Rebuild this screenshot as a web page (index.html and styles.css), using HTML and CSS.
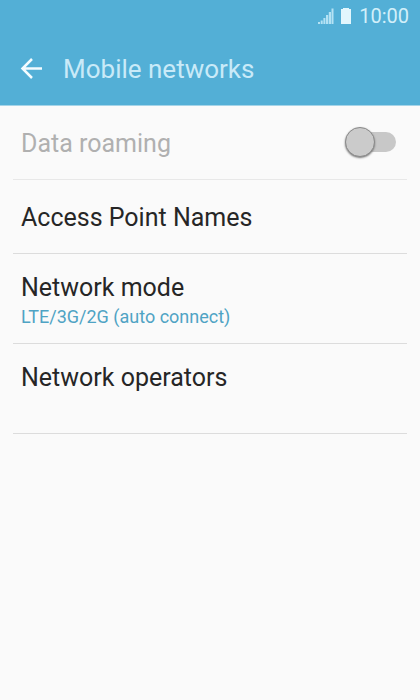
FILE: index.html
```
<!DOCTYPE html>
<html lang="en">
<head>
<meta charset="utf-8">
<meta name="viewport" content="width=device-width, initial-scale=1">
<title>Mobile networks</title>
<link rel="stylesheet" href="styles.css">
</head>
<body>
<header class="header">
  <div class="status">
    <svg class="signal" width="17" height="16" viewBox="0 0 17 16" aria-hidden="true">
      <path d="M1 14h2v2H1zM3.700 12.500h2V16h-2zM6.400 10h2v6h-2zM9 7h2.200v9H9zM11.800 4H14v12h-2.200zM14.500 0.500h2V16h-2z"/>
    </svg>
    <svg class="battery" width="12" height="16" viewBox="0 0 12 16" aria-hidden="true">
      <path d="M3 0h6v1h2v15H1V1h2z"/>
    </svg>
    <time class="clock">10:00</time>
  </div>
  <div class="bar">
    <button class="back" type="button" aria-label="Back">
      <svg width="22" height="22" viewBox="0 0 22 22" aria-hidden="true">
        <path d="M22 10.500H3M12 1L2.500 10.500L12 20"/>
      </svg>
    </button>
    <h1 class="title">Mobile networks</h1>
  </div>
</header>
<main class="list">
  <div class="row disabled">
    <label class="name" for="roaming">Data roaming</label>
    <input class="switch" id="roaming" type="checkbox" role="switch" disabled>
  </div>
  <button class="row" type="button"><span class="name">Access Point Names</span></button>
  <button class="row tall" type="button">
    <span class="name">Network mode</span>
    <span class="summary">LTE/3G/2G (auto connect)</span>
  </button>
  <button class="row tall" type="button">
    <span class="name">Network operators</span>
  </button>
</main>
</body>
</html>
```
FILE: styles.css
```
*,
*::before {
  box-sizing: border-box;
}

body {
  margin: 0;
  min-height: 100vh;
  background: #fafafa;
  color: #262626;
  font-family: Roboto, "Liberation Sans", sans-serif;
}

button {
  margin: 0;
  padding: 0;
  border: 0;
  background: none;
  color: inherit;
  font: inherit;
  text-align: left;
}

.header {
  background: #53afd6;
  border-bottom: 1px solid #a5d4e8;
}

.status {
  display: flex;
  align-items: center;
  justify-content: flex-end;
  height: 32px;
  padding-right: 11px;
  color: #d2effa;
}

.signal {
  fill: #b4e2f4;
}

.battery {
  margin: 0 7px 0 6px;
  fill: #e2f6fd;
}

.clock {
  font-size: 20px;
  line-height: 32px;
}

.bar {
  display: flex;
  align-items: center;
  height: 73px;
  padding: 0 20px;
}

.back {
  display: flex;
  margin-right: 21px;
}

.back path {
  fill: none;
  stroke: #f4fcff;
  stroke-width: 2.500;
}

.title {
  margin: 0;
  color: #c9eaf8;
  font-size: 26px;
  font-weight: 400;
  line-height: 32px;
}

.list {
  display: flex;
  flex-direction: column;
  padding: 0 13px;
}

.row {
  display: flex;
  align-items: center;
  justify-content: space-between;
  min-height: 74px;
  padding: 2px 8px 0;
  border-bottom: 1px solid #dcdcdc;
}

.tall {
  flex-direction: column;
  align-items: flex-start;
  justify-content: flex-start;
  min-height: 90px;
  padding-top: 18px;
}

.name {
  font-size: 25px;
  line-height: 32px;
}

.summary {
  color: #4fa3c4;
  font-size: 18px;
  line-height: 26px;
}

.disabled {
  color: #b0b0b0;
  border-bottom-color: #e8e8e8;
}

.switch {
  appearance: none;
  position: relative;
  width: 46px;
  height: 20px;
  margin: 0 3px 4px 0;
  border-radius: 10px;
  background: #c8c8c8;
}

.switch::before {
  content: "";
  position: absolute;
  top: -5px;
  left: -5px;
  width: 30px;
  height: 30px;
  border: 1px solid #8a8a8a;
  border-radius: 50%;
  background: #cbcbcb;
  box-shadow: 0 1px 2px #777;
}
```
